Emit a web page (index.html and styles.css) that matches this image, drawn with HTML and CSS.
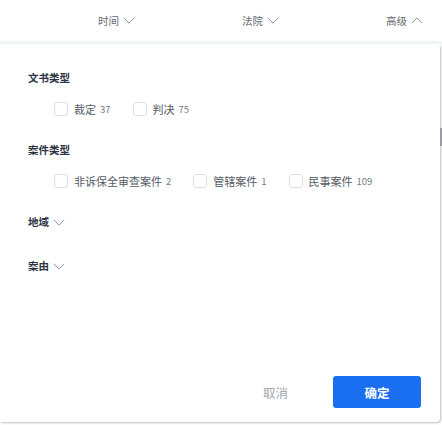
FILE: index.html
```html
<!DOCTYPE html>
<html lang="zh">
<head>
    <meta charset="UTF-8">
    <meta name="viewport" content="width=device-width, initial-scale=1.0">
    <title>高级筛选</title>
    <link rel="stylesheet" href="styles.css">
</head>
<body>
    <div class="tabs">
        <div class="tab">时间 <svg class="arrow" viewBox="0 0 14 8"><path d="M1 1l6 6 6-6"/></svg></div>
        <div class="tab">法院 <svg class="arrow" viewBox="0 0 14 8"><path d="M1 1l6 6 6-6"/></svg></div>
        <div class="tab">高级 <svg class="arrow" viewBox="0 0 14 8"><path d="M1 7l6-6 6 6"/></svg></div>
    </div>

    <div class="panel">
        <div class="scroll-thumb"></div>

        <div class="group">
            <div class="group-title">文书类型</div>
            <div class="options">
                <label class="option"><span class="box"></span>裁定<span class="count">37</span></label>
                <label class="option"><span class="box"></span>判决<span class="count">75</span></label>
            </div>
        </div>

        <div class="group">
            <div class="group-title">案件类型</div>
            <div class="options">
                <label class="option"><span class="box"></span>非诉保全审查案件<span class="count">2</span></label>
                <label class="option"><span class="box"></span>管辖案件<span class="count">1</span></label>
                <label class="option"><span class="box"></span>民事案件<span class="count">109</span></label>
            </div>
        </div>

        <div class="group fold">
            <div class="group-title">地域 <svg class="arrow" viewBox="0 0 14 8"><path d="M1 1l6 6 6-6"/></svg></div>
        </div>

        <div class="group fold">
            <div class="group-title">案由 <svg class="arrow" viewBox="0 0 14 8"><path d="M1 1l6 6 6-6"/></svg></div>
        </div>

        <div class="actions">
            <button class="btn-cancel">取消</button>
            <button class="btn-ok">确定</button>
        </div>
    </div>
</body>
</html>
```

FILE: styles.css
```css
html, body {
    margin: 0;
    padding: 0;
    background: #ffffff;
}
body {
    font-family: "Noto Sans CJK SC", "Noto Sans", sans-serif;
    width: 442px;
    height: 425px;
    overflow: hidden;
}
.tabs {
    height: 41px;
    display: flex;
    align-items: center;
    gap: 105px;
    padding-left: 98px;
    background: #ffffff;
    border-bottom: 3px solid #f3f4f7;
}
.tab {
    width: 39px;
    flex-shrink: 0;
    white-space: nowrap;
    display: flex;
    align-items: center;
    gap: 4px;
    font-size: 10.5px;
    color: #666a73;
}
.arrow {
    width: 12px;
    height: 7px;
    fill: none;
    stroke: #8a8e96;
    stroke-width: 1.1;
}
.panel {
    position: relative;
    width: 440px;
    height: 378px;
    box-sizing: border-box;
    padding: 27px 28px 0;
    border-radius: 0 4px 4px 0;
    box-shadow: 1px 1px 2px rgba(0, 0, 0, 0.25);
    display: flex;
    flex-direction: column;
}
.scroll-thumb {
    position: absolute;
    right: -2px;
    top: 84px;
    width: 2px;
    height: 18px;
    background: #9a9ca1;
}
.group-title {
    font-size: 10.5px;
    font-weight: bold;
    color: #2c3443;
    display: flex;
    align-items: center;
    gap: 4px;
    line-height: 14px;
}
.options {
    display: flex;
    padding: 16px 0 0 26px;
}
.option {
    display: flex;
    align-items: center;
    font-size: 11px;
    color: #555b66;
    margin-right: 22px;
}
.box {
    width: 12px;
    height: 12px;
    border: 1px solid #dcdfe6;
    border-radius: 3px;
    margin-right: 6px;
}
.count {
    font-size: 9.5px;
    color: #767b85;
    margin-left: 4px;
}
.group {
    margin-bottom: 26px;
}
.group.fold {
    margin-bottom: 30px;
}
.actions {
    margin-top: auto;
    display: flex;
    justify-content: flex-end;
    align-items: center;
    padding-bottom: 14px;
    margin-right: -9px;
}
.btn-cancel {
    background: none;
    border: none;
    font-family: inherit;
    font-size: 12.5px;
    color: #a3a7b0;
    margin-right: 45px;
    padding: 0;
}
.btn-ok {
    width: 88px;
    height: 32px;
    background: #1a6ff0;
    border: none;
    border-radius: 3px;
    color: #ffffff;
    font-family: inherit;
    font-size: 12.5px;
    font-weight: bold;
}
```
